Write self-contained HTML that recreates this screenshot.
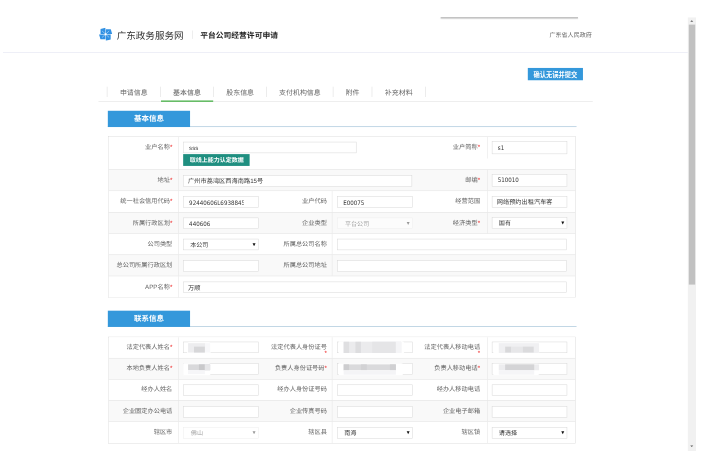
<!DOCTYPE html>
<html lang="zh-CN">
<head>
<meta charset="utf-8">
<title>平台公司经营许可申请 - 广东政务服务网</title>
<style>
*{box-sizing:border-box;margin:0;padding:0}
html,body{width:709px;height:457px;overflow:hidden;background:#fff}
body{font-family:"Liberation Sans","Noto Sans CJK SC",sans-serif;color:#333;text-rendering:geometricPrecision}
#stage{position:absolute;left:0;top:0;width:1440px;height:928px;transform:scale(.49236);transform-origin:0 0;background:#fff;overflow:hidden}
#view{position:absolute;left:6px;top:35px;width:1408px;height:881px;overflow:hidden;background:#fff}
/* coordinates inside #view are stage coords minus (6,35) */
.peek{position:absolute;left:889px;top:0;width:279px;height:2px;background:#9e9e9e;box-shadow:0 1px 3px rgba(0,0,0,.18);z-index:5}
header{position:absolute;left:0;top:0;width:1391px;height:71.9px;background:#fff;border-bottom:1.6px solid #dcdeee}
.hd{position:absolute;left:195px;top:0;width:1002px;height:70px}
.logo{position:absolute;left:-0.5px;top:20.8px;width:27px;height:27px}
.site{position:absolute;left:36px;top:24px;font-size:19.4px;line-height:28px;color:#333;font-weight:400;white-space:nowrap}
.vbar{position:absolute;left:189px;top:27px;width:1px;height:17px;background:#ddd}
.app{position:absolute;left:205.6px;top:26px;font-size:15.8px;line-height:26px;font-weight:700;color:#222;white-space:nowrap}
.gov{position:absolute;right:1px;top:26px;font-size:12.3px;line-height:20px;color:#666;white-space:nowrap}
main{position:absolute;left:195px;top:71px;width:1002px}
.submit{position:absolute;left:871px;top:31.5px;width:112px;height:25px;border:0;padding:3.2px 0 0;background:#3498db;color:#fff;font:700 12.7px/25px "Liberation Sans","Noto Sans CJK SC",sans-serif;text-align:center;white-space:nowrap}
.tabs{position:absolute;left:-1px;top:60px;width:1004px;height:41px;border-bottom:1.2px solid #ddd;list-style:none}
.tabs li{position:absolute;top:10px;height:21px;border-left:1px solid #d8d8d8;font-size:14.1px;line-height:22px;text-align:center;color:#666;white-space:nowrap}
.tabs li.last{border-right:1px solid #d8d8d8}
.tabs li.on{color:#555}
.tabs li.on:after{content:"";position:absolute;left:0.5px;right:0;top:28px;height:2.5px;background:#5cb85c}
.sec{position:absolute;left:18px;width:952px}
.sec h2{height:33px;border-bottom:1.5px solid #84aecb;font-size:15.2px;font-weight:700;color:#fff}
.sec h2 span{display:block;width:167px;height:33px;line-height:32px;background:#3498db;text-align:center}
.grid{margin-top:19px;margin-left:1.4px;width:949px;border:1px solid #d8d8d8;border-bottom-width:1.2px;font-size:12px}
.row{display:flex;height:43.25px;border-top:1px solid #dfdfdf;background:#fff}
.row:first-child{border-top:0}
.row.alt{background:#f9f9f9}
.row.tall{height:66.7px}
.row.r1{height:41.45px}.r1 .fd{padding-top:8.7px}.r1 .lb{padding-top:10.7px}.r1 .lb.wrap{padding-top:13px}
.lb{flex:none;text-align:right;padding:0 12.5px 0 0;color:#666;line-height:17px;border-right:1px solid #e3e3e3;font-size:12.6px;padding-top:12.5px;white-space:nowrap}
.lb i{font-style:normal;color:#e22;}
.lb.wrap{line-height:13.75px;padding-top:14.8px}
.w1{width:142.1px}.w2{width:142.5px;padding-right:10.3px}.w3{width:142.4px;padding-right:14.8px}
.fd{flex:none;padding:10.5px 0 0 10.2px}
.f1{width:169.3px;padding-left:9px}.f2{width:173.2px}.f3{width:179.3px;padding-left:8.5px}
.fd.span2{width:485px;padding-left:9px}.fd.span3{width:806.7px;padding-left:9px}
.in{display:block;width:152.3px;height:23px;border:1px solid #d6d6d6;background:#fff;font:12.6px/23px "Liberation Sans","Noto Sans CJK SC",sans-serif;color:#383838;padding:0 0 0 8.6px;white-space:nowrap;position:relative}
.in.lat{font-family:"DejaVu Sans Condensed","DejaVu Sans",sans-serif;font-stretch:condensed;font-size:12.5px;line-height:23.6px;color:#333;padding-left:10.6px}
.in.lat span{display:block;width:110.8px;overflow:hidden}
.in.lib{font-family:"Liberation Sans",sans-serif;font-size:12.4px}
.in.wide2{width:352px}.in.wide1{width:465px}.in.wide3{width:778.3px}
.in.sel{padding-left:12.7px;font-size:12.4px}
.in.sel:after{content:"";position:absolute;right:4.6px;top:7.4px;border:3.3px solid transparent;border-top:6.6px solid #111;border-bottom:0}
.in.dis{border-color:#ececec;color:#a4a4a4;background:rgba(255,255,255,.5);padding-left:14px}
.in.dis:after{border-top-color:#999}
.gbtn{display:block;margin-top:1.5px;width:135px;height:24px;background:#1f8f80;color:#fff;font-weight:700;font-size:12.2px;line-height:24px;text-align:center;white-space:nowrap}
.mz{position:absolute;background:#fff;overflow:hidden;display:block}
.mz b{position:absolute;display:block;filter:blur(.7px)}
.sb{position:absolute;left:1391px;top:0;width:17px;height:881px;background:#f1f1f1}
.sb b{position:absolute;left:2px;top:15.3px;width:12.5px;height:528px;background:#c1c1c1}
.sb:before,.sb:after{content:"";position:absolute;left:4.9px;border:3.5px solid transparent}
.sb:before{top:6.3px;border-bottom:3.8px solid #585858;border-top:0}
.sb:after{bottom:7.8px;border-top:3.8px solid #585858;border-bottom:0}
</style>
</head>
<body>
<div id="stage">
<div id="view">
  <div class="peek"></div>
  <header>
    <div class="hd">
      <svg class="logo" viewBox="0 0 27 27" aria-hidden="true">
        <g transform="translate(13.5 13.5)">
          <g fill="#3291e3">
            <path id="blade" d="M-10.3 -10.5 L-0.45 -13.3 L-0.45 -0.35 L-10.3 -0.35 Z"/>
            <path d="M-10.3 -10.5 L-0.45 -13.3 L-0.45 -0.35 L-10.3 -0.35 Z" transform="rotate(90)"/>
            <path d="M-10.3 -10.5 L-0.45 -13.3 L-0.45 -0.35 L-10.3 -0.35 Z" transform="rotate(180)"/>
            <path d="M-10.3 -10.5 L-0.45 -13.3 L-0.45 -0.35 L-10.3 -0.35 Z" transform="rotate(270)"/>
          </g>
          <path d="M-7.2 -6.6 L7.2 6.6 M7.2 -6.6 L-7.2 6.6" stroke="#eaf4fd" stroke-width="1.15" stroke-opacity=".85" fill="none"/>
          <circle r="2" fill="#fff"/>
        </g>
      </svg>
      <div class="site">广东政务服务网</div>
      <div class="vbar"></div>
      <div class="app">平台公司经营许可申请</div>
      <div class="gov">广东省人民政府</div>
    </div>
  </header>

  <main>
    <button class="submit" type="button">确认无误并提交</button>
    <ul class="tabs">
      <li style="left:17.4px;width:107.8px">申请信息</li>
      <li class="on" style="left:125.2px;width:108.2px">基本信息</li>
      <li style="left:233.4px;width:107.7px">股东信息</li>
      <li style="left:341.1px;width:135px">支付机构信息</li>
      <li style="left:476.1px;width:78.4px">附件</li>
      <li class="last" style="left:554.5px;width:110.6px">补充材料</li>
    </ul>

    <section class="sec" style="top:118.5px">
      <h2><span>基本信息</span></h2>
      <div class="grid">
        <div class="row tall">
          <div class="lb w1">业户名称<i>*</i></div>
          <div class="fd span2"><div class="in wide2 lat lib">sss</div><div class="gbtn">取线上能力认定数据</div></div>
          <div class="lb w3" style="height:44px">业户简称<i>*</i></div>
          <div class="fd f3"><div class="in lat" style="margin-top:-1.3px;height:25.8px;padding-top:1.3px">s1</div></div>
        </div>
        <div class="row alt">
          <div class="lb w1">地址<i>*</i></div>
          <div class="fd span2"><div class="in wide1">广州市荔湾区西海南路15号</div></div>
          <div class="lb w3">邮编<i>*</i></div>
          <div class="fd f3"><div class="in lat" style="margin-top:-1.4px;height:24.4px;line-height:22px">510010</div></div>
        </div>
        <div class="row">
          <div class="lb w1">统一社会信用代码<i>*</i></div>
          <div class="fd f1"><div class="in lat"><span>92440606L6938845</span></div></div>
          <div class="lb w2">业户代码</div>
          <div class="fd f2"><div class="in lat">E00075</div></div>
          <div class="lb w3">经营范围</div>
          <div class="fd f3"><div class="in">网络预约出租汽车客</div></div>
        </div>
        <div class="row alt">
          <div class="lb w1">所属行政区划<i>*</i></div>
          <div class="fd f1"><div class="in lat">440606</div></div>
          <div class="lb w2">企业类型</div>
          <div class="fd f2"><div class="in sel dis">平台公司</div></div>
          <div class="lb w3">经济类型<i>*</i></div>
          <div class="fd f3"><div class="in sel" style="margin-top:-1px;height:24px">国有</div></div>
        </div>
        <div class="row">
          <div class="lb w1">公司类型</div>
          <div class="fd f1"><div class="in sel">本公司</div></div>
          <div class="lb w2">所属总公司名称</div>
          <div class="fd" style="width:495px"><div class="in" style="width:466px"></div></div>
        </div>
        <div class="row alt">
          <div class="lb w1">总公司所属行政区划</div>
          <div class="fd f1"><div class="in"></div></div>
          <div class="lb w2">所属总公司地址</div>
          <div class="fd" style="width:495px"><div class="in" style="width:466px"></div></div>
        </div>
        <div class="row">
          <div class="lb w1">APP名称<i>*</i></div>
          <div class="fd span3"><div class="in wide3">万顺</div></div>
        </div>
      </div>
    </section>

    <section class="sec" style="top:525.3px">
      <h2><span>联系信息</span></h2>
      <div class="grid" style="margin-top:19.9px">
        <div class="row r1">
          <div class="lb w1">法定代表人姓名<i>*</i></div>
          <div class="fd f1"><div class="in"><span class="mz" style="left:7.0px;top:0.1px;width:47.8px;height:23.8px;border-radius:5px 4px 4px 0"><b style="left:2.0px;top:2.3px;width:34.4px;height:18.6px;background:#ededef"></b><b style="left:13.5px;top:9.5px;width:22.1px;height:11.5px;background:#d7d7d9"></b><b style="left:36.4px;top:2.3px;width:10.0px;height:18.6px;background:#f8f8fa"></b></span></div></div>
          <div class="lb w2 wrap">法定代表人身份证号<br><i>*</i></div>
          <div class="fd f2"><div class="in"><span class="mz" style="left:1.1px;top:-1.9px;width:133.2px;height:25.8px;border-radius:0 4px 4px 0"><b style="left:10.9px;top:1.4px;width:116.6px;height:22.3px;background:#ebebed"></b><b style="left:10.9px;top:1.4px;width:10.6px;height:22.3px;background:#dfdfe1"></b><b style="left:34.4px;top:1.4px;width:11.5px;height:22.3px;background:#dddddf"></b><b style="left:68.8px;top:1.4px;width:47.3px;height:22.3px;background:#e5e5e7"></b><b style="left:116.0px;top:1.4px;width:11.5px;height:22.3px;background:#f5f5f7"></b></span></div></div>
          <div class="lb w3 wrap">法定代表人移动电话<br><i>*</i></div>
          <div class="fd f3"><div class="in"><span class="mz" style="left:1.6px;top:1.0px;width:94.5px;height:21.5px;border-radius:0 5px 4px 0"><b style="left:11.5px;top:1.4px;width:81.7px;height:19.5px;background:#f0f0f2"></b><b style="left:24.4px;top:8.6px;width:11.5px;height:11.5px;background:#d9d9db"></b><b style="left:35.8px;top:8.6px;width:24.4px;height:11.5px;background:#e7e7e9"></b><b style="left:60.2px;top:8.6px;width:21.5px;height:11.5px;background:#dbdbdd"></b></span></div></div>
        </div>
        <div class="row alt">
          <div class="lb w1">本地负责人姓名<i>*</i></div>
          <div class="fd f1"><div class="in"><span class="mz" style="left:-1.0px;top:-1.6px;width:55.9px;height:24.4px;border-radius:0 4px 4px 0"><b style="left:9.2px;top:2.9px;width:45.3px;height:11.5px;background:#d9d9db"></b><b style="left:31.5px;top:2.9px;width:12.0px;height:11.5px;background:#c9c9cb"></b><b style="left:43.5px;top:2.9px;width:10.9px;height:11.5px;background:#e6e6e8"></b><b style="left:9.2px;top:14.3px;width:34.4px;height:8.6px;background:#f6f6f8"></b></span></div></div>
          <div class="lb w2">负责人身份证号码<i>*</i></div>
          <div class="fd f2"><div class="in"><span class="mz" style="left:1.1px;top:-1.6px;width:131.8px;height:24.4px;border-radius:0 4px 4px 0"><b style="left:10.9px;top:2.9px;width:105.1px;height:11.5px;background:#dadadc"></b><b style="left:10.9px;top:2.9px;width:10.6px;height:11.5px;background:#cdcdcf"></b><b style="left:45.8px;top:2.9px;width:11.5px;height:11.5px;background:#d2d2d4"></b><b style="left:104.6px;top:2.9px;width:11.5px;height:11.5px;background:#d0d0d2"></b><b style="left:10.9px;top:14.3px;width:105.1px;height:9.2px;background:#f4f4f6"></b></span></div></div>
          <div class="lb w3">负责人移动电话<i>*</i></div>
          <div class="fd f3"><div class="in"><span class="mz" style="left:1.6px;top:-0.1px;width:94.5px;height:22.9px;border-radius:0 5px 5px 0"><b style="left:11.5px;top:1.4px;width:81.7px;height:11.5px;background:#ededef"></b><b style="left:24.4px;top:1.4px;width:58.7px;height:11.5px;background:#d4d4d6"></b><b style="left:11.5px;top:12.9px;width:71.6px;height:9.2px;background:#f5f5f7"></b></span></div></div>
        </div>
        <div class="row">
          <div class="lb w1">经办人姓名</div>
          <div class="fd f1"><div class="in"></div></div>
          <div class="lb w2">经办人身份证号码</div>
          <div class="fd f2"><div class="in"></div></div>
          <div class="lb w3">经办人移动电话</div>
          <div class="fd f3"><div class="in"></div></div>
        </div>
        <div class="row alt">
          <div class="lb w1">企业固定办公电话</div>
          <div class="fd f1"><div class="in"></div></div>
          <div class="lb w2">企业传真号码</div>
          <div class="fd f2"><div class="in"></div></div>
          <div class="lb w3">企业电子邮箱</div>
          <div class="fd f3"><div class="in"></div></div>
        </div>
        <div class="row">
          <div class="lb w1">辖区市</div>
          <div class="fd f1"><div class="in sel dis">佛山</div></div>
          <div class="lb w2">辖区县</div>
          <div class="fd f2"><div class="in sel">南海</div></div>
          <div class="lb w3">辖区镇</div>
          <div class="fd f3"><div class="in sel">请选择</div></div>
        </div>
      </div>
    </section>
  </main>

  <div class="sb"><b></b></div>
</div>
</div>
</body>
</html>
